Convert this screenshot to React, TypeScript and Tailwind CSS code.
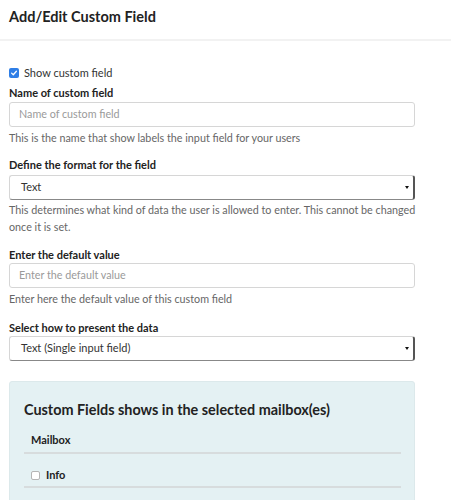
import React from 'react';

const Label: React.FC<{ children: React.ReactNode; className?: string }> = ({ children, className = '' }) => (
  <div className={`text-[11px] leading-[16px] font-bold text-[#222] ${className}`}>{children}</div>
);

const Help: React.FC<{ children: React.ReactNode; className?: string }> = ({ children, className = '' }) => (
  <p className={`text-[10.75px] leading-[17px] text-[#666] max-w-[408px] ${className}`}>{children}</p>
);

const TextInput: React.FC<{ placeholder: string; className?: string }> = ({ placeholder, className = '' }) => (
  <div
    className={`h-[25px] w-[406px] rounded-[3px] border border-[#d6d6d6] bg-white px-[9px] flex items-center text-[10.75px] text-[#9a9a9a] ${className}`}
  >
    {placeholder}
  </div>
);

const FakeSelect: React.FC<{ value: string; className?: string }> = ({ value, className = '' }) => (
  <div
    className={`h-[25px] w-[406px] rounded-[3px] border border-[#d6d6d6] border-r-2 border-r-[#555] border-b-[#888] bg-white pl-[11px] pr-[4px] flex items-center text-[11px] text-[#333] ${className}`}
  >
    <span className="flex-1">{value}</span>
    <span className="w-0 h-0 border-l-[2.5px] border-r-[2.5px] border-t-[3px] border-l-transparent border-r-transparent border-t-[#111]" />
  </div>
);

export default function App() {
  return (
    <div className="w-[451px] h-[500px] overflow-hidden bg-white" style={{ fontFamily: 'Lato, "Open Sans", sans-serif' }}>
      {/* header */}
      <div className="h-[41px] border-b-2 border-[#f2f2f2] px-[9px] pt-[7px]">
        <h1 className="text-[14.5px] leading-[20px] font-bold text-[#222]">Add/Edit Custom Field</h1>
      </div>

      <div className="px-[9px]">
        <label className="mt-[24px] h-[16px] flex items-center gap-[5px] text-[11px] text-[#333]">
          <span className="w-[10px] h-[10px] rounded-[2px] bg-[#2f7ee6] flex items-center justify-center">
            <svg viewBox="0 0 10 10" className="w-[8px] h-[8px]">
              <path d="M2 5.2 L4.1 7.2 L8 2.8" fill="none" stroke="white" strokeWidth="1.6" strokeLinecap="round" strokeLinejoin="round" />
            </svg>
          </span>
          Show custom field
        </label>

        <Label className="mt-[4px]">Name of custom field</Label>
        <TextInput className="mt-[1px]" placeholder="Name of custom field" />
        <Help className="mt-[2px]">This is the name that show labels the input field for your users</Help>

        <Label className="mt-[11px]">Define the format for the field</Label>
        <FakeSelect className="mt-[2px]" value="Text" />
        <Help className="mt-[1px]">
          This determines what kind of data the user is allowed to enter. This cannot be changed once it is set.
        </Help>

        <Label className="mt-[12px]">Enter the default value</Label>
        <TextInput placeholder="Enter the default value" />
        <Help className="mt-[2px]">Enter here the default value of this custom field</Help>

        <Label className="mt-[13px]">Select how to present the data</Label>
        <FakeSelect value="Text (Single input field)" />

        {/* mailbox panel */}
        <div className="mt-[20px] w-[406px] h-[140px] rounded-[3px] bg-[#e4f1f3] border border-[#dce9eb] px-[14px] pt-[18px]">
          <h2 className="text-[14.4px] leading-[20px] font-bold text-[#222]">Custom Fields shows in the selected mailbox(es)</h2>
          <div className="mt-[12px] w-[377px]">
            <div className="pl-[7px] pb-[6px] h-[22px] border-b-2 border-[#d7dcdd] text-[11px] leading-[16px] font-bold text-[#222]">
              Mailbox
            </div>
            <div className="pl-[7px] pt-[13px] pb-[3px] border-b-2 border-[#d7dcdd] flex items-center gap-[6px] h-[34px]">
              <span className="w-[9px] h-[9px] rounded-[2px] border border-[#b5b5b5] bg-white" />
              <span className="text-[11px] leading-[16px] font-bold text-[#222]">Info</span>
            </div>
          </div>
        </div>
      </div>
    </div>
  );
}
